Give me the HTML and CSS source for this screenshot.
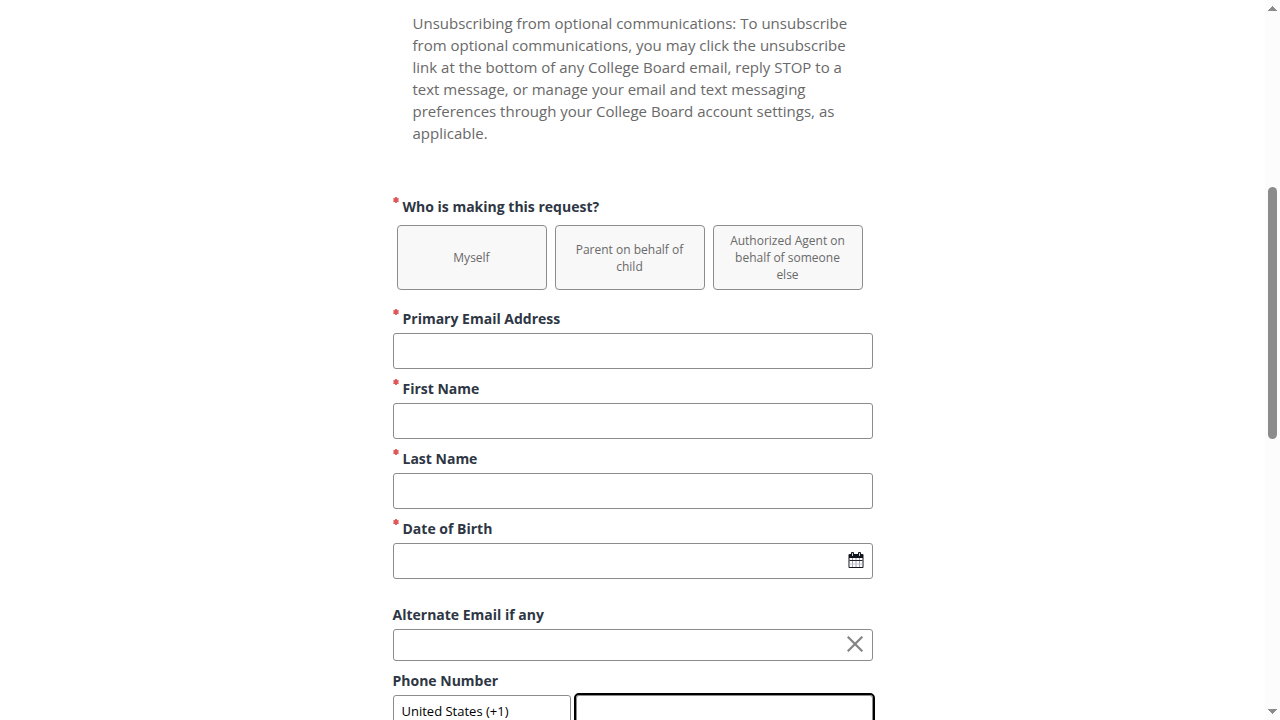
FILE: index.html
```html
<!DOCTYPE html>
<html lang="en">
<head>
<meta charset="utf-8">
<meta name="viewport" content="width=device-width, initial-scale=1">
<title>Privacy Request Form</title>
<link rel="stylesheet" href="styles.css">
</head>
<body>
<svg class="sprite" aria-hidden="true">
  <symbol id="star" viewBox="0 0 6 6">
    <path d="M3 0V6M0.4 1.5L5.6 4.5M5.6 1.5L0.4 4.5" fill="none" stroke="currentColor" stroke-width="1.8"/>
  </symbol>
</svg>
<div class="viewport">
  <main class="page">
    <form class="form">
      <p class="notice">Unsubscribing from optional communications: To unsubscribe from optional communications, you may click the unsubscribe link at the bottom of any College Board email, reply STOP to a text message, or manage your email and text messaging preferences through your College Board account settings, as applicable.</p>

      <div class="field field-choices" role="group" aria-labelledby="who">
        <div class="label" id="who"><svg class="star"><use href="#star"/></svg>Who is making this request?</div>
        <div class="choices">
          <button class="choice" type="button">Myself</button>
          <button class="choice" type="button">Parent on behalf of child</button>
          <button class="choice" type="button">Authorized Agent on behalf of someone else</button>
        </div>
      </div>

      <div class="field">
        <label class="label" for="email"><svg class="star"><use href="#star"/></svg>Primary Email Address</label>
        <input class="input" id="email" type="email" required>
      </div>
      <div class="field">
        <label class="label" for="first"><svg class="star"><use href="#star"/></svg>First Name</label>
        <input class="input" id="first" type="text" required>
      </div>
      <div class="field">
        <label class="label" for="last"><svg class="star"><use href="#star"/></svg>Last Name</label>
        <input class="input" id="last" type="text" required>
      </div>
      <div class="field field-date">
        <label class="label" for="dob"><svg class="star"><use href="#star"/></svg>Date of Birth</label>
        <div class="control">
          <input class="input" id="dob" type="text" required>
          <button class="icon-button" type="button" aria-label="Open calendar">
            <svg width="16" height="16" viewBox="0 0 16 16">
              <path d="M1.5 2H14.5Q15.5 2 15.5 3V15Q15.5 16 14.5 16H1.5Q0.5 16 0.5 15V3Q0.5 2 1.5 2Z" fill="#14141c"/>
              <path d="M3 1Q3 0 4 0H5Q6 0 6 1V4H3ZM10 1Q10 0 11 0H12Q13 0 13 1V4H10Z" fill="#14141c"/>
              <path d="M4 1H5V4H4ZM11 1H12V4H11Z" fill="#b9cfe6"/>
              <path d="M1.5 6H14.5V15H1.5Z" fill="#fff"/>
              <path d="M4.5 6V15M8 6V15M11.5 6V15" stroke="#a4a4b8" fill="none"/>
              <path d="M1.5 8.5H14.5" stroke="#24242e" fill="none"/>
              <path d="M1.5 12H14.5" stroke="#c4c4cc" fill="none"/>
            </svg>
          </button>
        </div>
      </div>
      <div class="field">
        <label class="label" for="alt">Alternate Email if any</label>
        <div class="control">
          <input class="input input-short" id="alt" type="email">
          <button class="icon-button" type="button" aria-label="Clear">
            <svg width="17" height="16" viewBox="0 0 17 16"><path d="M0.7 0.7L15.3 15.3M15.3 0.7L0.7 15.3" stroke="#858585" stroke-width="2.2" fill="none"/></svg>
          </button>
        </div>
      </div>
      <div class="field">
        <label class="label" for="phone">Phone Number</label>
        <div class="phone">
          <select class="input input-short country" aria-label="Country code"><option>United States (+1)</option></select>
          <input class="input input-short phone-number" id="phone" type="tel">
        </div>
      </div>
    </form>
  </main>
  <div class="scrollbar" aria-hidden="true">
    <svg class="arrow" viewBox="0 0 9 5"><path d="M4 0H5V1H6V2H7V3H8V4H9V5H0V4H1V3H2V2H3V1H4Z"/></svg>
    <div class="track"><div class="thumb"></div></div>
    <svg class="arrow" viewBox="0 0 9 5"><path d="M0 0H9V1H8V2H7V3H6V4H5V5H4V4H3V3H2V2H1V1H0Z"/></svg>
  </div>
</div>
</body>
</html>
```
FILE: styles.css
```css
* { box-sizing: border-box; }

body {
  margin: 0;
  background: #fff;
  color: #2e3644;
  font-family: "Open Sans", sans-serif;
  font-size: 14px;
}

.sprite {
  position: absolute;
  width: 0;
  height: 0;
}

.viewport {
  display: flex;
  height: 100vh;
  overflow: hidden;
}

.page {
  flex: 1;
  overflow: hidden;
}

.form {
  max-width: 480px;
  margin: 0 auto;
  padding: 12px 0 24px;
}

.notice {
  margin: 0 0 53px;
  padding: 0 20px;
  color: #696969;
  font-size: 15px;
  line-height: 22px;
}

.field { margin-bottom: 10px; }
.field-choices { margin-bottom: 19px; }
.field-date { margin-bottom: 26px; }

.label {
  display: flex;
  align-items: flex-start;
  gap: 4px;
  margin-bottom: 4px;
  font-weight: 700;
  line-height: 20px;
}

.star {
  width: 6px;
  height: 6px;
  color: #e05555;
}

.choices {
  display: grid;
  grid-template-columns: repeat(3, 1fr);
  gap: 8px;
  margin: 8px 10px 0 4px;
}

.choice {
  height: 65px;
  padding: 0 12px;
  border: 1px solid #8c8c8c;
  border-radius: 4px;
  background: #f8f8f8;
  color: #696969;
  font: 12px/17px "Open Sans", sans-serif;
}

.input {
  display: block;
  width: 100%;
  height: 36px;
  padding: 0 8px;
  border: 1px solid #8c8c8c;
  border-radius: 3px;
  background: #fff;
  color: #000;
  font: 13px "Open Sans", sans-serif;
}

.input-short { height: 32px; }

.control { position: relative; }

.icon-button {
  position: absolute;
  top: 0;
  right: 8px;
  bottom: 2px;
  display: flex;
  align-items: center;
  justify-content: center;
  width: 18px;
  padding: 0;
  border: 0;
  background: none;
}

.phone {
  display: flex;
  gap: 5px;
}

.country {
  flex: 0 0 178px;
  appearance: none;
}

.phone-number {
  flex: 1;
  min-width: 0;
  outline: 2px solid #000;
}

.scrollbar {
  display: flex;
  flex-direction: column;
  align-items: center;
  width: 15px;
  padding: 6px 0;
  background: #fcfcfc;
}

.arrow {
  width: 9px;
  height: 5px;
  fill: #8b8b8b;
}

.track {
  flex: 1;
  display: grid;
  grid-template-rows: 176fr 252fr 270fr;
}

.thumb {
  grid-row: 2;
  width: 9px;
  border-radius: 5px;
  background: #8b8b8b;
}
```
